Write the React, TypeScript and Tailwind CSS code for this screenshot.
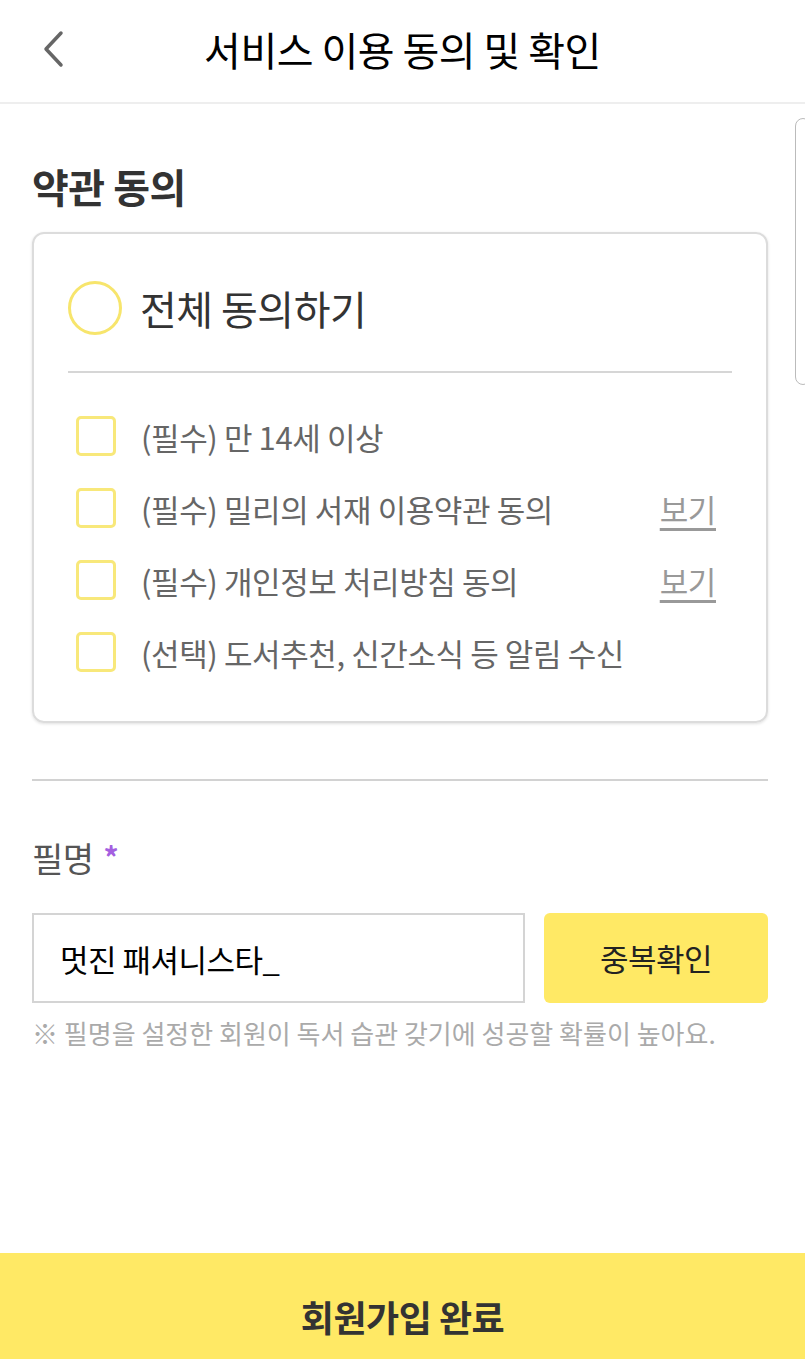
import React from 'react';

const font = { fontFamily: '"Noto Sans CJK KR", "Noto Sans", sans-serif' };

const terms = [
  { label: '(필수) 만 14세 이상', view: false },
  { label: '(필수) 밀리의 서재 이용약관 동의', view: true },
  { label: '(필수) 개인정보 처리방침 동의', view: true },
  { label: '(선택) 도서추천, 신간소식 등 알림 수신', view: false },
];

const App: React.FC = () => {
  return (
    <main className="relative w-[805px] h-[1359px] bg-white flex flex-col overflow-hidden" style={font}>
      {/* header */}
      <header className="relative h-[104px] shrink-0 flex items-center justify-center border-b-2 border-[#eeeeee]">
        <button className="absolute left-[38px] top-[28px] w-[30px] h-[42px] flex items-center justify-center">
          <svg width="24" height="38" viewBox="0 0 24 38" fill="none">
            <path d="M20 3 L5 19 L20 35" stroke="#666" strokeWidth="3.5" strokeLinecap="round" strokeLinejoin="round" />
          </svg>
        </button>
        <h1 className="text-[40px] text-black tracking-[-0.5px] leading-none -mt-[4px]">서비스 이용 동의 및 확인</h1>
      </header>

      <div className="flex-1 pl-[32px] pr-[37px]">
        <h2 className="mt-[62px] text-[40px] font-bold text-[#333] leading-none tracking-[-0.5px]">약관 동의</h2>

        <section className="mt-[26px] h-[491px] rounded-[12px] border-2 border-[#dcdcdc] shadow-[0_1px_3px_rgba(0,0,0,0.12)] px-[34px]">
          <div className="flex items-center h-[137px] pt-[10px]">
            <span className="w-[54px] h-[54px] rounded-full border-[3px] border-[#f7e56c]" />
            <span className="ml-[18px] text-[40px] text-[#333] tracking-[-0.5px] leading-none">전체 동의하기</span>
          </div>
          <div className="h-[2px] bg-[#d6d6d6]" />
          <ul className="pt-[43px] flex flex-col gap-[32px] pl-[8px] pr-[16px]">
            {terms.map((t) => (
              <li key={t.label} className="flex items-center h-[40px]">
                <span className="w-[40px] h-[40px] rounded-[5px] border-[3px] border-[#f8e87a]" />
                <span className="ml-[25px] flex-1 text-[31px] text-[#666] tracking-[-0.4px] leading-none">{t.label}</span>
                {t.view && (
                  <span className="text-[31px] text-[#999] underline underline-offset-[6px] tracking-[-0.4px] leading-none">보기</span>
                )}
              </li>
            ))}
          </ul>
        </section>

        <div className="mt-[56px] h-[2px] bg-[#d2d2d2]" />

        <div className="mt-[60px] flex items-start h-[34px]">
          <span className="text-[34px] text-[#555] leading-none tracking-[-0.5px]">필명</span>
          <span className="ml-[10px] text-[30px] text-[#a45fe0] leading-none font-bold">*</span>
        </div>

        <div className="mt-[38px] flex gap-[19px] h-[90px]">
          <div className="w-[493px] h-full border-2 border-[#d4d4d4] flex items-center pl-[26px]">
            <span className="text-[31px] text-black leading-none tracking-[-0.5px]">멋진 패셔니스타_</span>
          </div>
          <button className="flex-1 h-full rounded-[6px] bg-[#ffe965] text-[31px] text-[#222] tracking-[-0.5px]">중복확인</button>
        </div>

        <p className="mt-[17px] text-[26px] text-[#aaa] leading-none">
          ※ 필명을 설정한 회원이 독서 습관 갖기에 성공할 확률이 높아요.
        </p>
      </div>

      <button className="h-[106px] shrink-0 bg-[#ffe965] text-[36px] font-bold text-[#333] tracking-[-0.5px] pt-[20px]">
        회원가입 완료
      </button>

      {/* edge panel handle */}
      <div className="absolute right-[-6px] top-[118px] w-[16px] h-[267px] rounded-[10px] border border-[#bbb] bg-white" />
    </main>
  );
};

export default App;
